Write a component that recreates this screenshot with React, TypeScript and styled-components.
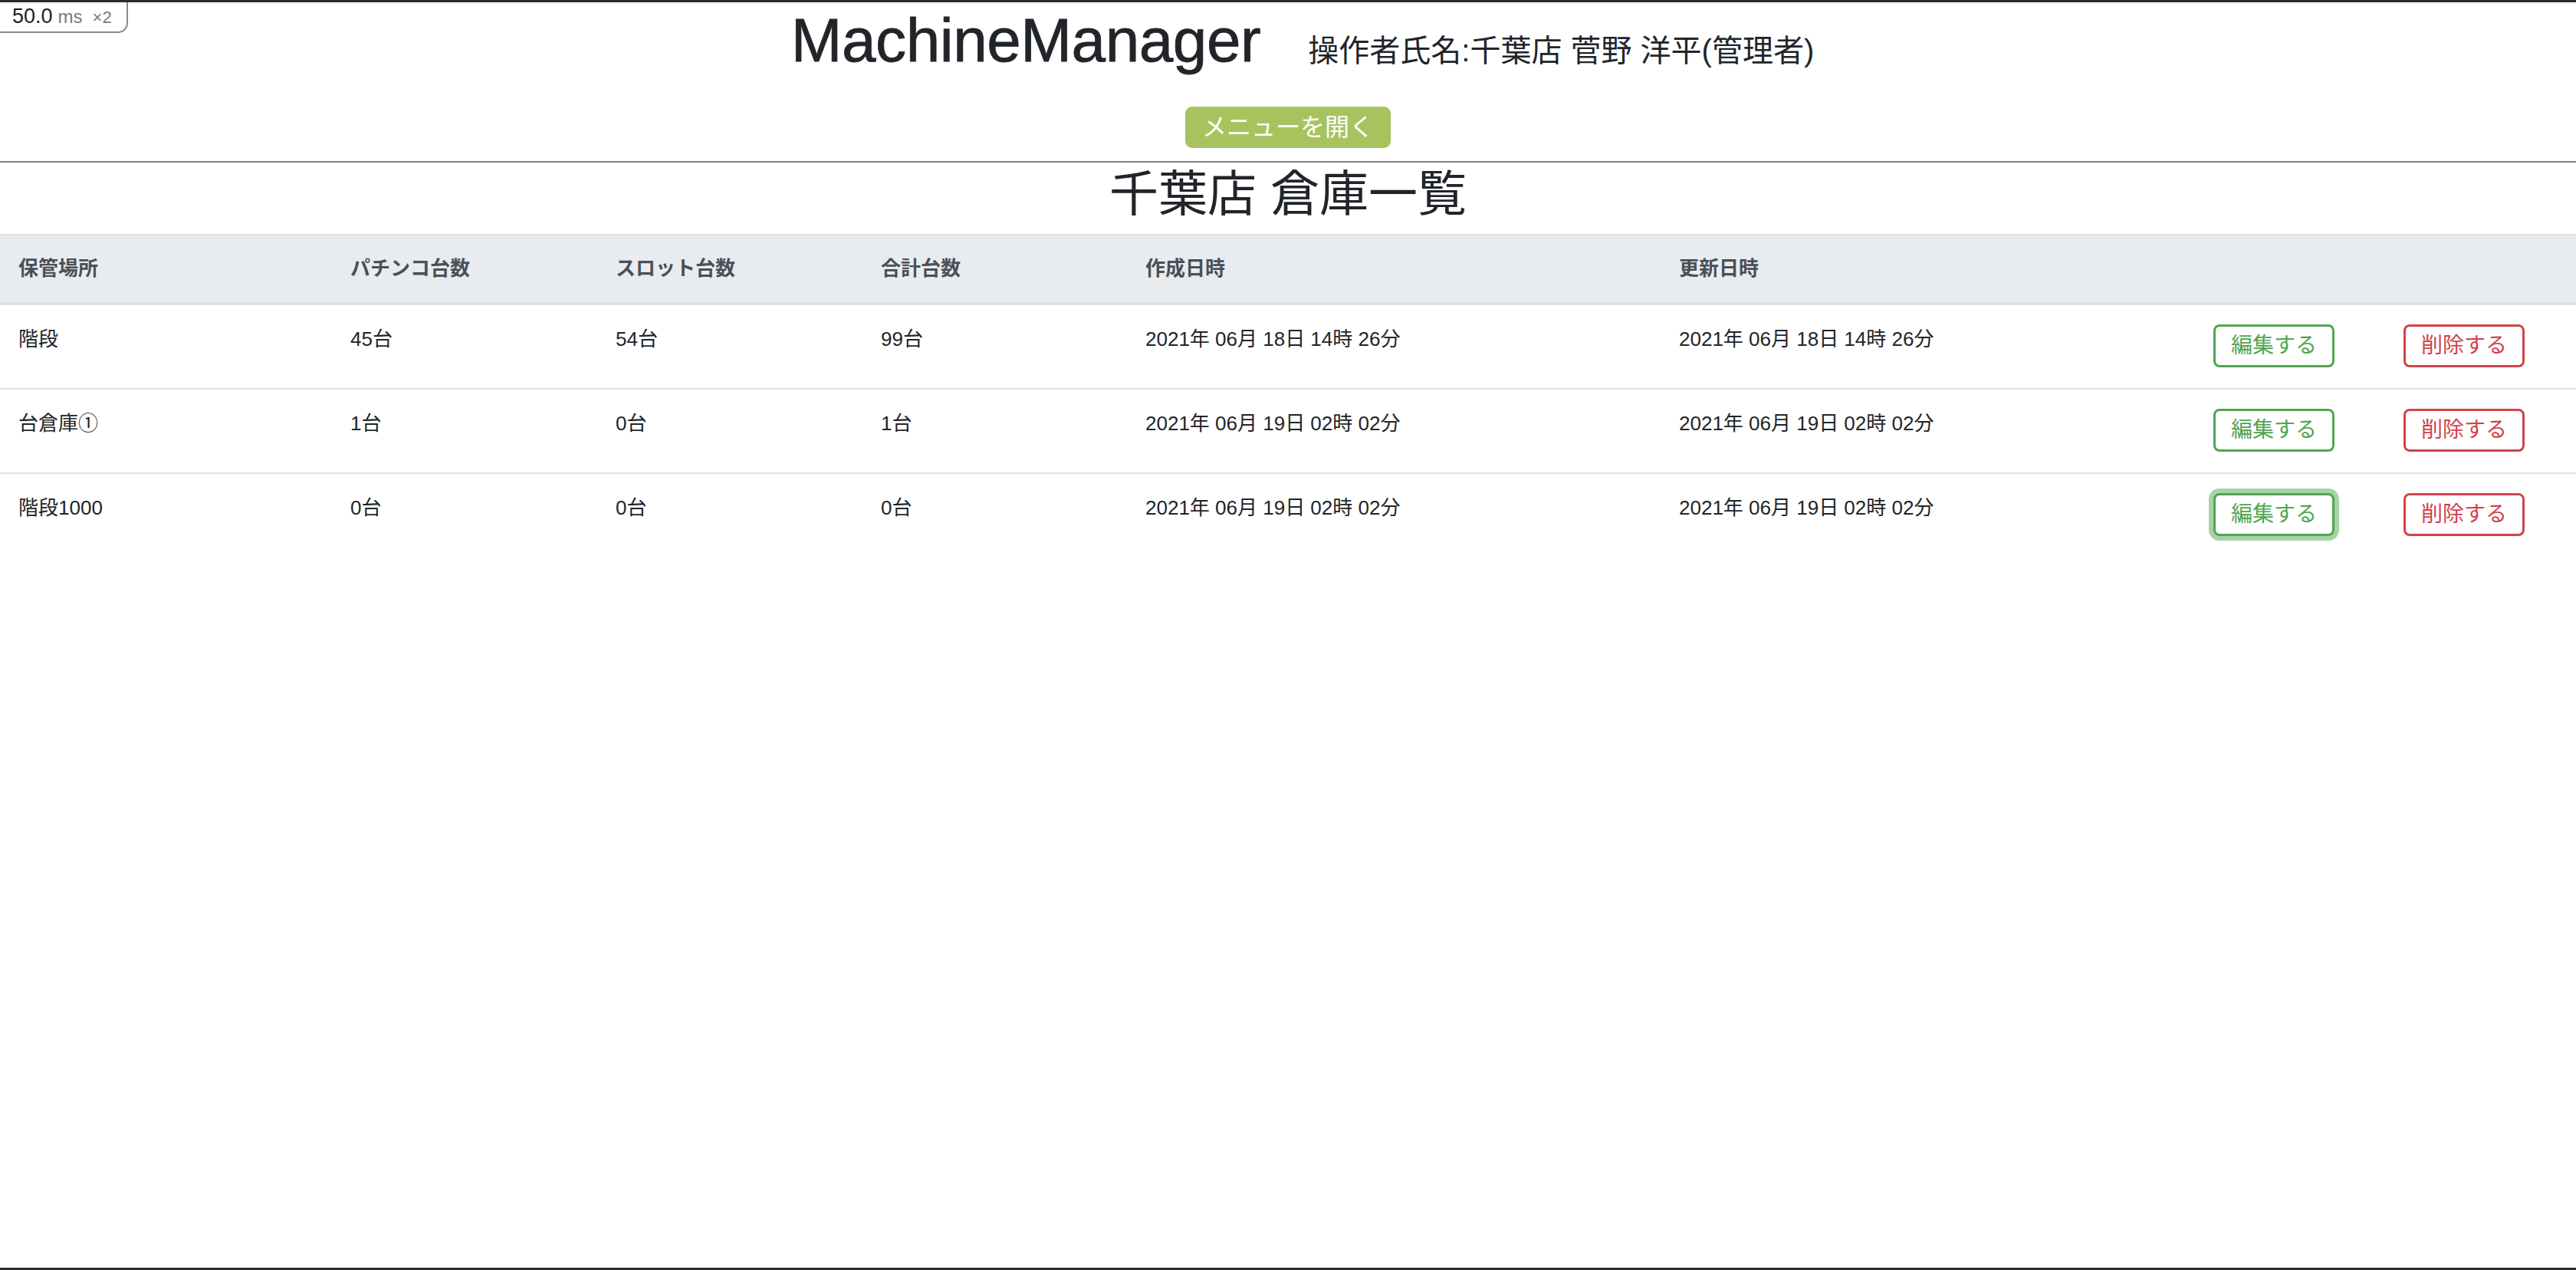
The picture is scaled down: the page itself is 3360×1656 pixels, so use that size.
import React from "react";
import styled, { createGlobalStyle, css } from "styled-components";

const FONT = `"Liberation Sans", "Noto Sans CJK JP", sans-serif`;

const GlobalStyle = createGlobalStyle`
  html, body {
    margin: 0;
    padding: 0;
    background: #ffffff;
  }
  body {
    font-family: ${FONT};
    color: #212529;
  }
  * { box-sizing: border-box; }
`;

const Page = styled.div`
  position: relative;
  min-height: 1656px;
  border-top: 3px solid #2b2b2b;
  border-bottom: 3px solid #2b2b2b;
  background: #ffffff;
  overflow: hidden;
`;

const TimingBadge = styled.div`
  position: absolute;
  top: 0;
  left: 0;
  width: 167px;
  height: 40px;
  display: flex;
  align-items: baseline;
  gap: 7px;
  padding: 3px 0 0 16px;
  background: #ffffff;
  border-right: 2px solid #8a8a8a;
  border-bottom: 2px solid #8a8a8a;
  border-bottom-right-radius: 13px;
  font-family: ${FONT};
  z-index: 5;
`;

const BadgeValue = styled.span`
  font-size: 27px;
  line-height: 31px;
  color: #1e1e1e;
`;

const BadgeUnit = styled.span<{ $size: number; $gap?: number }>`
  font-size: ${(p) => p.$size}px;
  line-height: 31px;
  color: #7a7a7a;
  margin-left: ${(p) => p.$gap ?? 0}px;
`;

const Header = styled.header`
  display: flex;
  flex-direction: column;
  align-items: center;
  padding-bottom: 17px;
  border-bottom: 2px solid #808080;
`;

const TitleRow = styled.div`
  display: flex;
  align-items: baseline;
  justify-content: center;
  align-self: stretch;
  padding: 2px 0 0 38px;
`;

const AppName = styled.h1`
  margin: 0;
  font-family: ${FONT};
  font-size: 80px;
  line-height: 96px;
  font-weight: 400;
  color: #212529;
  letter-spacing: -0.4px;
  -webkit-text-stroke: 0.8px #212529;
`;

const Operator = styled.span`
  margin-left: 62px;
  font-size: 40px;
  line-height: 48px;
  color: #212529;
`;

const MenuButton = styled.button`
  margin-top: 38px;
  height: 54px;
  padding: 0 22px;
  border: none;
  border-radius: 9px;
  background: #a8c35e;
  color: #ffffff;
  font-family: ${FONT};
  font-size: 32px;
  line-height: 54px;
  cursor: pointer;
`;

const PageTitle = styled.h2`
  margin: 5px 0 0;
  text-align: center;
  font-family: ${FONT};
  font-size: 64px;
  line-height: 72px;
  font-weight: 400;
  color: #212529;
`;

const Table = styled.table`
  width: 100%;
  margin-top: 16px;
  border-collapse: collapse;
  table-layout: fixed;
`;

const Col = styled.col<{ $w: number }>`
  width: ${(p) => p.$w}px;
`;

const HeadCell = styled.th`
  padding: 24px;
  text-align: left;
  vertical-align: top;
  background: #e9ecef;
  color: #495057;
  font-size: 26px;
  line-height: 39px;
  font-weight: 700;
  border-top: 2px solid #dee2e6;
  border-bottom: 4px solid #dee2e6;
  white-space: nowrap;
`;

const Row = styled.tr`
  &:last-child td {
    border-bottom: none;
  }
`;

const Cell = styled.td`
  padding: 25px 24px 27px;
  vertical-align: top;
  font-size: 26px;
  line-height: 39px;
  color: #212529;
  border-top: 2px solid #dee2e6;
  white-space: nowrap;
`;

const ActionButton = styled.button<{ $variant: "edit" | "delete"; $focused?: boolean }>`
  display: inline-block;
  vertical-align: top;
  height: 56px;
  padding: 0 20px;
  border-radius: 8px;
  background: #ffffff;
  font-family: ${FONT};
  font-size: 28px;
  line-height: 50px;
  cursor: pointer;
  ${(p) =>
    p.$variant === "edit"
      ? css`
          border: 3px solid #52a552;
          color: #4fa54f;
        `
      : css`
          border: 3px solid #d0444a;
          color: #d0434b;
        `}
  ${(p) =>
    p.$focused &&
    css`
      box-shadow: 0 0 0 6px rgba(82, 165, 82, 0.5);
    `}
`;

const columnWidths = [433, 346, 346, 345, 696, 697, 248, 249];
const headers = ["保管場所", "パチンコ台数", "スロット台数", "合計台数", "作成日時", "更新日時", "", ""];

type Storage = {
  name: string;
  pachinko: string;
  slot: string;
  total: string;
  created: string;
  updated: string;
};

const rows: Storage[] = [
  {
    name: "階段",
    pachinko: "45台",
    slot: "54台",
    total: "99台",
    created: "2021年 06月 18日 14時 26分",
    updated: "2021年 06月 18日 14時 26分",
  },
  {
    name: "台倉庫①",
    pachinko: "1台",
    slot: "0台",
    total: "1台",
    created: "2021年 06月 19日 02時 02分",
    updated: "2021年 06月 19日 02時 02分",
  },
  {
    name: "階段1000",
    pachinko: "0台",
    slot: "0台",
    total: "0台",
    created: "2021年 06月 19日 02時 02分",
    updated: "2021年 06月 19日 02時 02分",
  },
];

export default function App() {
  return (
    <>
      <GlobalStyle />
      <Page>
        <TimingBadge>
          <BadgeValue>50.0</BadgeValue>
          <BadgeUnit $size={24}>ms</BadgeUnit>
          <BadgeUnit $size={22} $gap={6}>×2</BadgeUnit>
        </TimingBadge>
        <Header>
          <TitleRow>
            <AppName>MachineManager</AppName>
            <Operator>操作者氏名:千葉店 菅野 洋平(管理者)</Operator>
          </TitleRow>
          <MenuButton>メニューを開く</MenuButton>
        </Header>
        <PageTitle>千葉店 倉庫一覧</PageTitle>
        <Table>
          <colgroup>
            {columnWidths.map((w, i) => (
              <Col key={i} $w={w} />
            ))}
          </colgroup>
          <thead>
            <tr>
              {headers.map((h, i) => (
                <HeadCell key={i}>{h}</HeadCell>
              ))}
            </tr>
          </thead>
          <tbody>
            {rows.map((r, i) => (
              <Row key={i}>
                <Cell>{r.name}</Cell>
                <Cell>{r.pachinko}</Cell>
                <Cell>{r.slot}</Cell>
                <Cell>{r.total}</Cell>
                <Cell>{r.created}</Cell>
                <Cell>{r.updated}</Cell>
                <Cell>
                  <ActionButton $variant="edit" $focused={i === rows.length - 1}>
                    編集する
                  </ActionButton>
                </Cell>
                <Cell>
                  <ActionButton $variant="delete">削除する</ActionButton>
                </Cell>
              </Row>
            ))}
          </tbody>
        </Table>
      </Page>
    </>
  );
}
